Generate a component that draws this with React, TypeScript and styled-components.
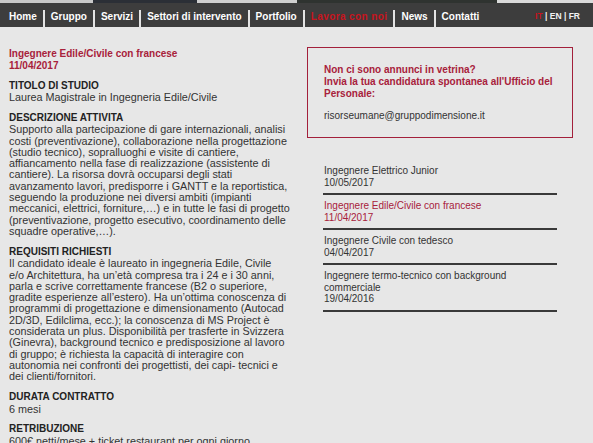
import React from 'react';
import styled, { createGlobalStyle } from 'styled-components';

const Global = createGlobalStyle`
  html, body { margin: 0; padding: 0; background: #e7e7e7; }
  body { font-family: "Liberation Sans", Arial, sans-serif; }
`;

const Page = styled.div`
  width: 593px;
  min-height: 443px;
  background: #e7e7e7;
  overflow: hidden;
`;

const Banner = styled.div`
  height: 3px;
  background: linear-gradient(
    to right,
    #c9c9c9 0 93px,
    #2b2f36 93px 197px,
    #cfcfcf 197px 297px,
    #2f3330 297px 497px,
    #dadada 497px
  );
`;

const NavBar = styled.nav`
  height: 24px;
  background: #3d3d3d;
  display: flex;
  align-items: flex-end;
  justify-content: space-between;
  padding-left: 3px;
`;

const NavList = styled.ul`
  list-style: none;
  margin: 0 0 -2px;
  padding: 0;
  display: flex;
  align-items: flex-end;
`;

const NavItem = styled.li<{ $active?: boolean; $last?: boolean }>`
  height: 19px;
  padding: 0 6px;
  border-right: ${(p) => (p.$last ? 'none' : '2px solid #e4e4e4')};
  font-size: 10px;
  font-weight: bold;
  line-height: 14px;
  color: ${(p) => (p.$active ? '#c8141e' : '#ffffff')};
  letter-spacing: ${(p) => (p.$active ? '0.4px' : '0')};
  white-space: nowrap;
`;

const Lang = styled.div`
  align-self: center;
  padding: 1px 13px 0 0;
  font-size: 8.5px;
  font-weight: bold;
  color: #f2f2f2;
`;

const LangActive = styled.span`
  color: #c8141e;
`;

const Main = styled.main`
  display: grid;
  grid-template-columns: 290px 266px;
  column-gap: 8px;
  padding: 21px 0 0 9px;
`;

const Article = styled.article`
  display: flex;
  flex-direction: column;
  gap: 8.5px;
`;

const JobTitle = styled.h1`
  margin: 0;
  font-size: 10px;
  font-weight: bold;
  line-height: 11.5px;
  color: #a8213b;
`;

const Section = styled.section`
  display: flex;
  flex-direction: column;
`;

const SectionHead = styled.h2`
  margin: 0;
  font-size: 10px;
  font-weight: bold;
  line-height: 12.5px;
  color: #222;
  text-transform: uppercase;
`;

const Body = styled.p`
  margin: 0;
  font-size: 10.8px;
  line-height: 11.3px;
  color: #333;
  white-space: pre-line;
`;

const Aside = styled.aside`
  display: flex;
  flex-direction: column;
  margin-top: -1px;
`;

const Notice = styled.div`
  border: 1px solid #a3203b;
  padding: 16px 16px 15px;
`;

const NoticeStrong = styled.p`
  margin: 0 0 10px;
  font-size: 10px;
  font-weight: bold;
  line-height: 12px;
  color: #a8213b;
`;

const Email = styled.p`
  margin: 0;
  font-size: 10px;
  line-height: 12px;
  color: #333;
`;

const JobList = styled.ul`
  list-style: none;
  margin: 22px 0 0 16px;
  padding: 0;
  width: 234px;
`;

const JobItem = styled.li<{ $active?: boolean }>`
  padding: 5px 24px 5px 1px;
  border-bottom: 2px solid #3a3a3a;
  font-size: 10px;
  line-height: 11.5px;
  color: ${(p) => (p.$active ? '#a8213b' : '#333')};
`;

const navItems = [
  'Home',
  'Gruppo',
  'Servizi',
  'Settori di intervento',
  'Portfolio',
  'Lavora con noi',
  'News',
  'Contatti',
];

const jobs = [
  { title: 'Ingegnere Elettrico Junior', date: '10/05/2017' },
  { title: 'Ingegnere Edile/Civile con francese', date: '11/04/2017', active: true },
  { title: 'Ingegnere Civile con tedesco', date: '04/04/2017' },
  { title: 'Ingegnere termo-tecnico con background commerciale', date: '19/04/2016' },
];

const descrizione = [
  'Supporto alla partecipazione di gare internazionali, analisi',
  'costi (preventivazione), collaborazione nella progettazione',
  '(studio tecnico), sopralluoghi e visite di cantiere,',
  'affiancamento nella fase di realizzazione (assistente di',
  'cantiere). La risorsa dovrà occuparsi degli stati',
  'avanzamento lavori, predisporre i GANTT e la reportistica,',
  'seguendo la produzione nei diversi ambiti (impianti',
  'meccanici, elettrici, forniture,…) e in tutte le fasi di progetto',
  '(preventivazione, progetto esecutivo, coordinamento delle',
  'squadre operative,…).',
].join('\n');

const requisiti = [
  'Il candidato ideale è laureato in ingegneria Edile, Civile',
  'e/o Architettura, ha un’età compresa tra i 24 e i 30 anni,',
  'parla e scrive correttamente francese (B2 o superiore,',
  'gradite esperienze all’estero). Ha un’ottima conoscenza di',
  'programmi di progettazione e dimensionamento (Autocad',
  '2D/3D, Edilclima, ecc.); la conoscenza di MS Project è',
  'considerata un plus. Disponibilità per trasferte in Svizzera',
  '(Ginevra), background tecnico e predisposizione al lavoro',
  'di gruppo; è richiesta la capacità di interagire con',
  'autonomia nei confronti dei progettisti, dei capi- tecnici e',
  'dei clienti/fornitori.',
].join('\n');

export default function App() {
  return (
    <Page>
      <Global />
      <Banner />
      <NavBar>
        <NavList>
          {navItems.map((n, i) => (
            <NavItem key={n} $active={n === 'Lavora con noi'} $last={i === navItems.length - 1}>
              {n}
            </NavItem>
          ))}
        </NavList>
        <Lang>
          <LangActive>IT</LangActive> | EN | FR
        </Lang>
      </NavBar>
      <Main>
        <Article>
          <JobTitle>
            Ingegnere Edile/Civile con francese
            <br />
            11/04/2017
          </JobTitle>
          <Section>
            <SectionHead>Titolo di studio</SectionHead>
            <Body>Laurea Magistrale in Ingegneria Edile/Civile</Body>
          </Section>
          <Section>
            <SectionHead>Descrizione attivita</SectionHead>
            <Body>{descrizione}</Body>
          </Section>
          <Section>
            <SectionHead>Requisiti richiesti</SectionHead>
            <Body>{requisiti}</Body>
          </Section>
          <Section>
            <SectionHead>Durata contratto</SectionHead>
            <Body>6 mesi</Body>
          </Section>
          <Section>
            <SectionHead>Retribuzione</SectionHead>
            <Body>{'600€ netti/mese + ticket restaurant per ogni giorno\nlavorativo'}</Body>
          </Section>
        </Article>
        <Aside>
          <Notice>
            <NoticeStrong>
              Non ci sono annunci in vetrina?
              <br />
              Invia la tua candidatura spontanea all'Ufficio del Personale:
            </NoticeStrong>
            <Email>risorseumane@gruppodimensione.it</Email>
          </Notice>
          <JobList>
            {jobs.map((j) => (
              <JobItem key={j.title} $active={j.active}>
                {j.title}
                <br />
                {j.date}
              </JobItem>
            ))}
          </JobList>
        </Aside>
      </Main>
    </Page>
  );
}
